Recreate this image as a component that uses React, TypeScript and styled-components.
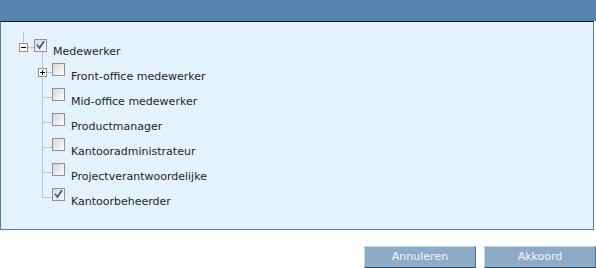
import React from 'react';
import styled, { createGlobalStyle } from 'styled-components';

const Global = createGlobalStyle`
  html, body { margin: 0; padding: 0; background: #ffffff; }
  body { font-family: "DejaVu Sans", Verdana, sans-serif; }
`;

const LINE = '#c4c4c4';

const Page = styled.div`
  width: 596px;
  height: 268px;
  display: flex;
  flex-direction: column;
  overflow: hidden;
`;

const Header = styled.div`
  flex: none;
  height: 21px;
  background: #5784ac;
`;

const Panel = styled.div`
  flex: none;
  width: 592px;
  height: 197px;
  padding-top: 10px;
  background: #e4f2fd;
  border: 1px solid #4e7fae;
  border-top-color: #101c28;
`;

const Tree = styled.div`
  display: flex;
  flex-direction: column;
`;

const Row = styled.div<{ $h: number }>`
  display: flex;
  align-items: stretch;
  height: ${p => p.$h}px;
`;

const Elbow = styled.svg`
  flex: none;
  display: block;
`;

const CheckCell = styled.div`
  flex: none;
  width: 19px;
  display: flex;
  flex-direction: column;
  padding-top: 7px;
`;

const Stem = styled.div<{ $show: boolean }>`
  flex: 1;
  margin-left: 8px;
  border-left: 1px solid ${p => (p.$show ? LINE : 'transparent')};
`;

const Box = styled.span`
  position: relative;
  display: block;
  width: 11px;
  height: 11px;
  border: 1px solid #8f9090;
  background: linear-gradient(135deg, #d6d6d6 0%, #ececec 55%, #fbfbfb 100%);
  flex: none;
`;

const Check = styled.svg`
  position: absolute;
  left: 0;
  top: 0;
  display: block;
`;

const Label = styled.span<{ $top: number }>`
  margin-top: ${p => p.$top}px;
  font-size: 11px;
  line-height: 13px;
  color: #1f1f1f;
  white-space: nowrap;
`;

const Footer = styled.div`
  flex: none;
  display: flex;
  justify-content: flex-end;
  gap: 8px;
  padding-top: 16px;
`;

const Button = styled.button`
  width: 112px;
  height: 22px;
  padding: 0;
  margin: 0;
  background: #8dabc7;
  border-style: solid;
  border-width: 1px;
  border-color: #bdd6ef #4f6f8f #2e4b68 #bdd6ef;
  color: #f2f6fa;
  font-family: "DejaVu Sans", Verdana, sans-serif;
  font-size: 11px;
  line-height: 18px;
  text-align: center;
  cursor: pointer;
`;

const CheckBox: React.FC<{ checked?: boolean }> = ({ checked }) => (
  <Box>
    {checked && (
      <Check width="11" height="11" viewBox="0 0 11 11">
        <path d="M2.5 5.5 L4.5 8 L8.5 2" fill="none" stroke="#3b55a5" strokeWidth="1.7" strokeLinecap="square" />
      </Check>
    )}
  </Box>
);

const RootElbow = () => (
  <Elbow width="33" height="24" viewBox="0 0 33 24" shapeRendering="crispEdges">
    <line x1="22.5" y1="0" x2="22.5" y2="11" stroke={LINE} />
    <line x1="27" y1="15.5" x2="33" y2="15.5" stroke={LINE} />
    <rect x="18.5" y="11.5" width="8" height="8" fill="#fff" stroke="#8f8f8f" />
    <line x1="20" y1="15.5" x2="25" y2="15.5" stroke="#000" />
  </Elbow>
);

const ChildElbow: React.FC<{ last?: boolean; expandable?: boolean }> = ({ last, expandable }) => (
  <Elbow width="51" height="25" viewBox="0 0 51 25" shapeRendering="crispEdges">
    <line x1="41.5" y1="0" x2="41.5" y2={last ? 16 : 25} stroke={LINE} />
    <line x1="41" y1="16.5" x2="51" y2="16.5" stroke={LINE} />
    {expandable && (
      <g>
        <rect x="37.5" y="12.5" width="8" height="8" fill="#fff" stroke="#8f8f8f" />
        <line x1="39" y1="16.5" x2="44" y2="16.5" stroke="#000" />
        <line x1="41.5" y1="14" x2="41.5" y2="19" stroke="#000" />
      </g>
    )}
  </Elbow>
);

type Child = { label: string; checked?: boolean; expandable?: boolean };

const children: Child[] = [
  { label: 'Front-office medewerker', expandable: true },
  { label: 'Mid-office medewerker' },
  { label: 'Productmanager' },
  { label: 'Kantooradministrateur' },
  { label: 'Projectverantwoordelijke' },
  { label: 'Kantoorbeheerder', checked: true },
];

export default function App() {
  return (
    <Page>
      <Global />
      <Header />
      <Panel>
        <Tree>
          <Row $h={24}>
            <RootElbow />
            <CheckCell>
              <CheckBox checked />
              <Stem $show />
            </CheckCell>
            <Label $top={13}>Medewerker</Label>
          </Row>
          {children.map((c, i) => (
            <Row $h={25} key={c.label}>
              <ChildElbow last={i === children.length - 1} expandable={c.expandable} />
              <CheckCell>
                <CheckBox checked={c.checked} />
              </CheckCell>
              <Label $top={14}>{c.label}</Label>
            </Row>
          ))}
        </Tree>
      </Panel>
      <Footer>
        <Button>Annuleren</Button>
        <Button>Akkoord</Button>
      </Footer>
    </Page>
  );
}
